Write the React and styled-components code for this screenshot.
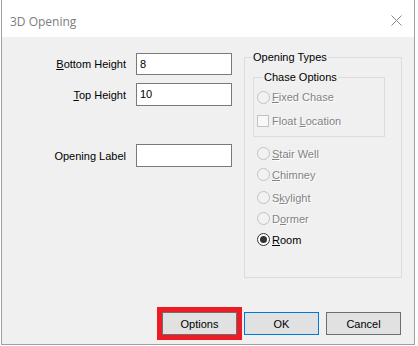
import React from 'react';
import styled, { createGlobalStyle } from 'styled-components';

const Global = createGlobalStyle`
  html, body { margin: 0; padding: 0; background: #ffffff; }
  body { font-family: "Liberation Sans", Arial, sans-serif; font-size: 11px; }
`;

const Window = styled.div`
  margin-left: 1px;
  width: 414px;
  height: 345px;
  box-sizing: border-box;
  border: 1px solid #a0a0a0;
  border-top: none;
  display: flex;
  flex-direction: column;
  background: #f0f0f0;
`;

const TitleBar = styled.div`
  height: 37px;
  flex: none;
  background: #ffffff;
  display: flex;
  align-items: center;
  justify-content: space-between;
  padding: 0 12px 0 8px;
  font-family: "Open Sans", "Noto Sans", sans-serif;
  font-size: 12px;
  color: #7d7d7d;
`;

const Title = styled.span`
  margin-top: 6px;
`;

const CloseIcon = styled.svg`
  width: 11px;
  height: 11px;
  margin-top: 4px;
`;

const Main = styled.div`
  display: flex;
  align-items: flex-start;
  padding-top: 14px;
`;

const Form = styled.div`
  width: 230px;
  margin-top: 2px;
  display: grid;
  grid-template-columns: 1fr 96px;
  column-gap: 10px;
  align-items: center;
`;

const Label = styled.label`
  justify-self: end;
  color: #000;
  white-space: nowrap;
  margin-top: ${(p) => p.$top || 0}px;
`;

const Input = styled.div`
  box-sizing: border-box;
  height: ${(p) => p.$h || 23}px;
  margin-top: ${(p) => p.$top || 0}px;
  border: 1px solid #7a7a7a;
  background: #fff;
  padding: 3px 3px;
  color: #000;
  line-height: 14px;
`;

const Group = styled.fieldset`
  margin: 0;
  box-sizing: border-box;
  border: 1px solid #dcdcdc;
  min-inline-size: 0;
  padding: ${(p) => p.$pad};
  width: ${(p) => p.$w}px;
  margin-left: ${(p) => p.$ml || 0}px;
  margin-top: ${(p) => p.$mt || 0}px;
`;

const Legend = styled.legend`
  padding: 0 1px;
  margin-left: ${(p) => p.$ml}px;
  line-height: 13px;
  color: #000;
  font-size: 11px;
`;

const List = styled.div`
  display: flex;
  flex-direction: column;
  padding-left: ${(p) => p.$pl || 0}px;
  margin-top: ${(p) => p.$mt || 0}px;
  gap: ${(p) => p.$gap || 0}px;
`;

const Option = styled.div`
  display: flex;
  align-items: center;
  height: ${(p) => p.$h || 21}px;
  margin-top: ${(p) => p.$mt || 0}px;
  gap: 2px;
`;

const RadioCircle = styled.span`
  box-sizing: border-box;
  width: 13px;
  height: 13px;
  border-radius: 50%;
  flex: none;
  border: 1px solid ${(p) => (p.$disabled ? '#c2c2c2' : '#333333')};
  background: ${(p) => (p.$disabled ? '#f2f2f2' : '#ffffff')};
  display: flex;
  align-items: center;
  justify-content: center;
  &::after {
    content: '';
    display: ${(p) => (p.$checked ? 'block' : 'none')};
    width: 7px;
    height: 7px;
    border-radius: 50%;
    background: #333333;
  }
`;

const CheckBox = styled.span`
  box-sizing: border-box;
  width: 12px;
  height: 12px;
  flex: none;
  border: 1px solid #c2c2c2;
  background: #f7f7f7;
  margin-right: 1px;
`;

const OptionText = styled.span`
  color: ${(p) => (p.$disabled ? '#838383' : '#000000')};
  text-shadow: ${(p) => (p.$disabled ? '1px 1px 0 #ffffff' : 'none')};
  white-space: nowrap;
  u { text-decoration: underline; text-underline-offset: 1px; }
`;

const Footer = styled.div`
  margin-top: auto;
  display: flex;
  justify-content: flex-end;
  gap: 7px;
  padding: 0 13px 9px 0;
`;

const Button = styled.button`
  box-sizing: border-box;
  width: 75px;
  height: 23px;
  margin: 0;
  padding: 0;
  font-family: "Liberation Sans", Arial, sans-serif;
  font-size: 11px;
  color: #000;
  background: #e1e1e1;
  border: 1px solid ${(p) => (p.$default ? '#0078d7' : '#6e6e6e')};
  ${(p) => p.$highlight && 'outline: 5px solid #ed1c24; outline-offset: 0;'}
`;

const RadioOption = ({ label, disabled = true, checked, mt, h }) => (
  <Option $mt={mt} $h={h}>
    <RadioCircle $disabled={disabled} $checked={checked} />
    <OptionText $disabled={disabled}>{label}</OptionText>
  </Option>
);

export default function App() {
  return (
    <>
      <Global />
      <Window>
        <TitleBar>
          <Title>3D Opening</Title>
          <CloseIcon viewBox="0 0 11 11">
            <path d="M0.5 0.5 L10.5 10.5 M10.5 0.5 L0.5 10.5" stroke="#8a8a8a" strokeWidth="1" fill="none" />
          </CloseIcon>
        </TitleBar>
        <Main>
          <Form>
            <Label><u>B</u>ottom Height</Label>
            <Input $h={22}>8</Input>
            <Label $top={8}><u>T</u>op Height</Label>
            <Input $top={8}>10</Input>
            <Label $top={38}>Opening Label</Label>
            <Input $top={38} />
          </Form>
          <Group $w={158} $ml={12} $pad="0 0 27px 8px">
            <Legend $ml={-1}>Opening Types</Legend>
            <Group $w={132} $mt={7} $pad="3px 0 5px 3px">
              <Legend $ml={6}>Chase Options</Legend>
              <List $gap={4}>
                <RadioOption h={20} label={<><u>F</u>ixed Chase</>} />
                <Option $h={20}>
                  <CheckBox />
                  <OptionText $disabled>Float <u>L</u>ocation</OptionText>
                </Option>
              </List>
            </Group>
            <List $pl={4} $mt={6}>
              <RadioOption label={<><u>S</u>tair Well</>} />
              <RadioOption label={<><u>C</u>himney</>} />
              <RadioOption mt={2} label={<>S<u>k</u>ylight</>} />
              <RadioOption label={<>D<u>o</u>rmer</>} />
              <RadioOption disabled={false} checked label={<><u>R</u>oom</>} />
            </List>
          </Group>
        </Main>
        <Footer>
          <Button $highlight>Options</Button>
          <Button $default>OK</Button>
          <Button>Cancel</Button>
        </Footer>
      </Window>
    </>
  );
}
